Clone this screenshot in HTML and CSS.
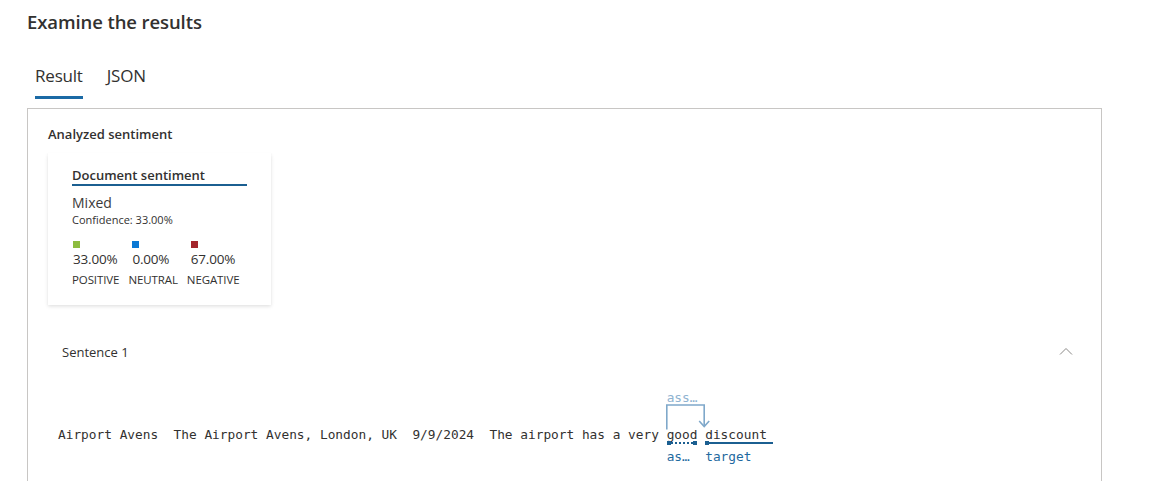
FILE: index.html
```html
<!DOCTYPE html>
<html lang="en">
<head>
<meta charset="utf-8">
<title>Examine the results</title>
<link rel="stylesheet" href="styles.css">
</head>
<body>
<div class="page">
  <h1 class="title">Examine the results</h1>
  <div class="tabs">
    <div class="tab active">Result</div>
    <div class="tab">JSON</div>
  </div>
  <div class="panel">
    <div class="section-title">Analyzed sentiment</div>
    <div class="card">
      <div class="card-title">Document sentiment</div>
      <div class="mixed">Mixed</div>
      <div class="confidence">Confidence: 33.00%</div>
      <div class="scores">
        <div class="score">
          <span class="swatch positive"></span>
          <span class="pct">33.00%</span>
          <span class="lbl">POSITIVE</span>
        </div>
        <div class="score">
          <span class="swatch neutral"></span>
          <span class="pct">0.00%</span>
          <span class="lbl">NEUTRAL</span>
        </div>
        <div class="score">
          <span class="swatch negative"></span>
          <span class="pct">67.00%</span>
          <span class="lbl">NEGATIVE</span>
        </div>
      </div>
    </div>

    <div class="sentence-head">
      <span class="sentence-name">Sentence 1</span>
      <svg class="chevron" width="14" height="8" viewBox="0 0 14 8" aria-hidden="true">
        <path d="M1 7.5 L7 1.5 L13 7.5" fill="none" stroke="#8a8886" stroke-width="1"/>
      </svg>
    </div>

    <div class="sentence-body">
      <div class="line">Airport Avens  The Airport Avens, London, UK  9/9/2024  The airport has a very <span class="tok tok-good">good<span class="rel-label">ass…</span><svg class="bracket" width="42" height="30" viewBox="0 0 42 30" aria-hidden="true"><path d="M0.8 25.5 V1 H38.2 V22" fill="none" stroke="#7fa8ca" stroke-width="1.6"/><path d="M33.2 17 L38.2 22.5 L43.2 17" fill="none" stroke="#7fa8ca" stroke-width="1.6"/></svg><span class="ul ul-dotted"></span><span class="tag">as…</span></span> <span class="tok tok-discount">discount<span class="ul ul-solid"></span><span class="tag">target</span></span> </div>
    </div>
  </div>
</div>
</body>
</html>
```

FILE: styles.css
```css
* { box-sizing: border-box; }

html, body {
  margin: 0;
  padding: 0;
  background: #ffffff;
}

body {
  font-family: "Open Sans", "Noto Sans", sans-serif;
  color: #323130;
  overflow: hidden;
}

.page {
  padding: 10px 0 0 27px;
  width: 1152px;
  height: 481px;
}

.title {
  margin: 0;
  font-size: 18.5px;
  line-height: 24px;
  font-weight: 600;
  letter-spacing: -0.1px;
  color: #323130;
}

.tabs {
  display: flex;
  gap: 24px;
  margin-top: 30px;
  padding-left: 8px;
}

.tab {
  font-size: 17px;
  line-height: 24px;
  padding-bottom: 8px;
  border-bottom: 3px solid transparent;
  color: #323130;
  letter-spacing: -0.2px;
}

.tab.active {
  border-bottom-color: #1b6aa5;
}

.panel {
  margin-top: 9px;
  width: 1075px;
  height: 373px;
  border: 1px solid #c8c6c4;
  border-bottom: none;
  padding: 16px 0 0 20px;
}

.section-title {
  font-size: 13px;
  line-height: 18px;
  font-weight: 600;
  color: #323130;
}

.card {
  margin-top: 10px;
  width: 223px;
  height: 152px;
  padding: 13px 24px 0 24px;
  background: #ffffff;
  box-shadow: 0 1.6px 3.6px rgba(0,0,0,0.13), 0 0.3px 0.9px rgba(0,0,0,0.11);
}

.card-title {
  font-size: 13px;
  line-height: 18px;
  font-weight: 600;
  border-bottom: 2px solid #1b5f91;
  width: 175px;
}

.mixed {
  margin-top: 8px;
  font-size: 14px;
  line-height: 18px;
  color: #3b3a39;
}

.confidence {
  font-size: 11px;
  line-height: 15px;
  color: #323130;
}

.scores {
  display: flex;
  gap: 9px;
  margin-top: 14px;
}

.score {
  display: flex;
  flex-direction: column;
  align-items: flex-start;
}

.swatch {
  display: block;
  width: 7px;
  height: 7px;
  margin-left: 1px;
}

.score + .score .swatch,
.score + .score .pct { margin-left: 4px; }

.swatch.positive { background: #8dbc3f; }
.swatch.neutral  { background: #0a78d4; }
.swatch.negative { background: #a4262c; }

.pct {
  font-size: 13.5px;
  line-height: 18px;
  margin-top: 2px;
  margin-left: 1px;
  letter-spacing: -0.2px;
}

.lbl {
  margin-top: 5px;
  font-size: 11.5px;
  line-height: 14px;
  letter-spacing: -0.1px;
  color: #323130;
}

.sentence-head {
  display: flex;
  justify-content: space-between;
  align-items: center;
  margin-top: 36px;
  padding: 0 29px 0 14px;
  height: 22px;
  width: 1054px;
}

.sentence-name {
  font-size: 13px;
  line-height: 18px;
  color: #323130;
}

.chevron { display: block; margin-top: -2px; }

.sentence-body {
  margin-top: 64px;
  padding-left: 10px;
}

.line {
  font-family: "DejaVu Sans Mono", "Liberation Mono", monospace;
  font-size: 12.8px;
  line-height: 16px;
  white-space: pre;
  color: #323130;
}

.tok {
  position: relative;
  display: inline-block;
}

.rel-label {
  position: absolute;
  left: 0;
  top: -37px;
  color: #8fb3d1;
  font-size: 12.8px;
  line-height: 16px;
}

.bracket {
  position: absolute;
  left: -0.5px;
  top: -23px;
  overflow: visible;
}

.ul {
  position: absolute;
  left: 0;
  top: 14px;
  height: 4px;
}

.ul-dotted {
  width: 30px;
  background:
    linear-gradient(#1b5f91, #1b5f91) left center / 4px 4px no-repeat,
    linear-gradient(#1b5f91, #1b5f91) right center / 4px 4px no-repeat,
    repeating-linear-gradient(to right, #1b5f91 0 2px, transparent 2px 4px) center / 100% 2px no-repeat;
}

.ul-solid {
  width: 68px;
  background:
    linear-gradient(#1b5f91, #1b5f91) left center / 4px 4px no-repeat,
    linear-gradient(#1b5f91, #1b5f91) center / 100% 2px no-repeat;
}

.tag {
  position: absolute;
  left: 0;
  top: 22px;
  color: #1f6aa0;
  font-size: 12.8px;
  line-height: 16px;
}
```
